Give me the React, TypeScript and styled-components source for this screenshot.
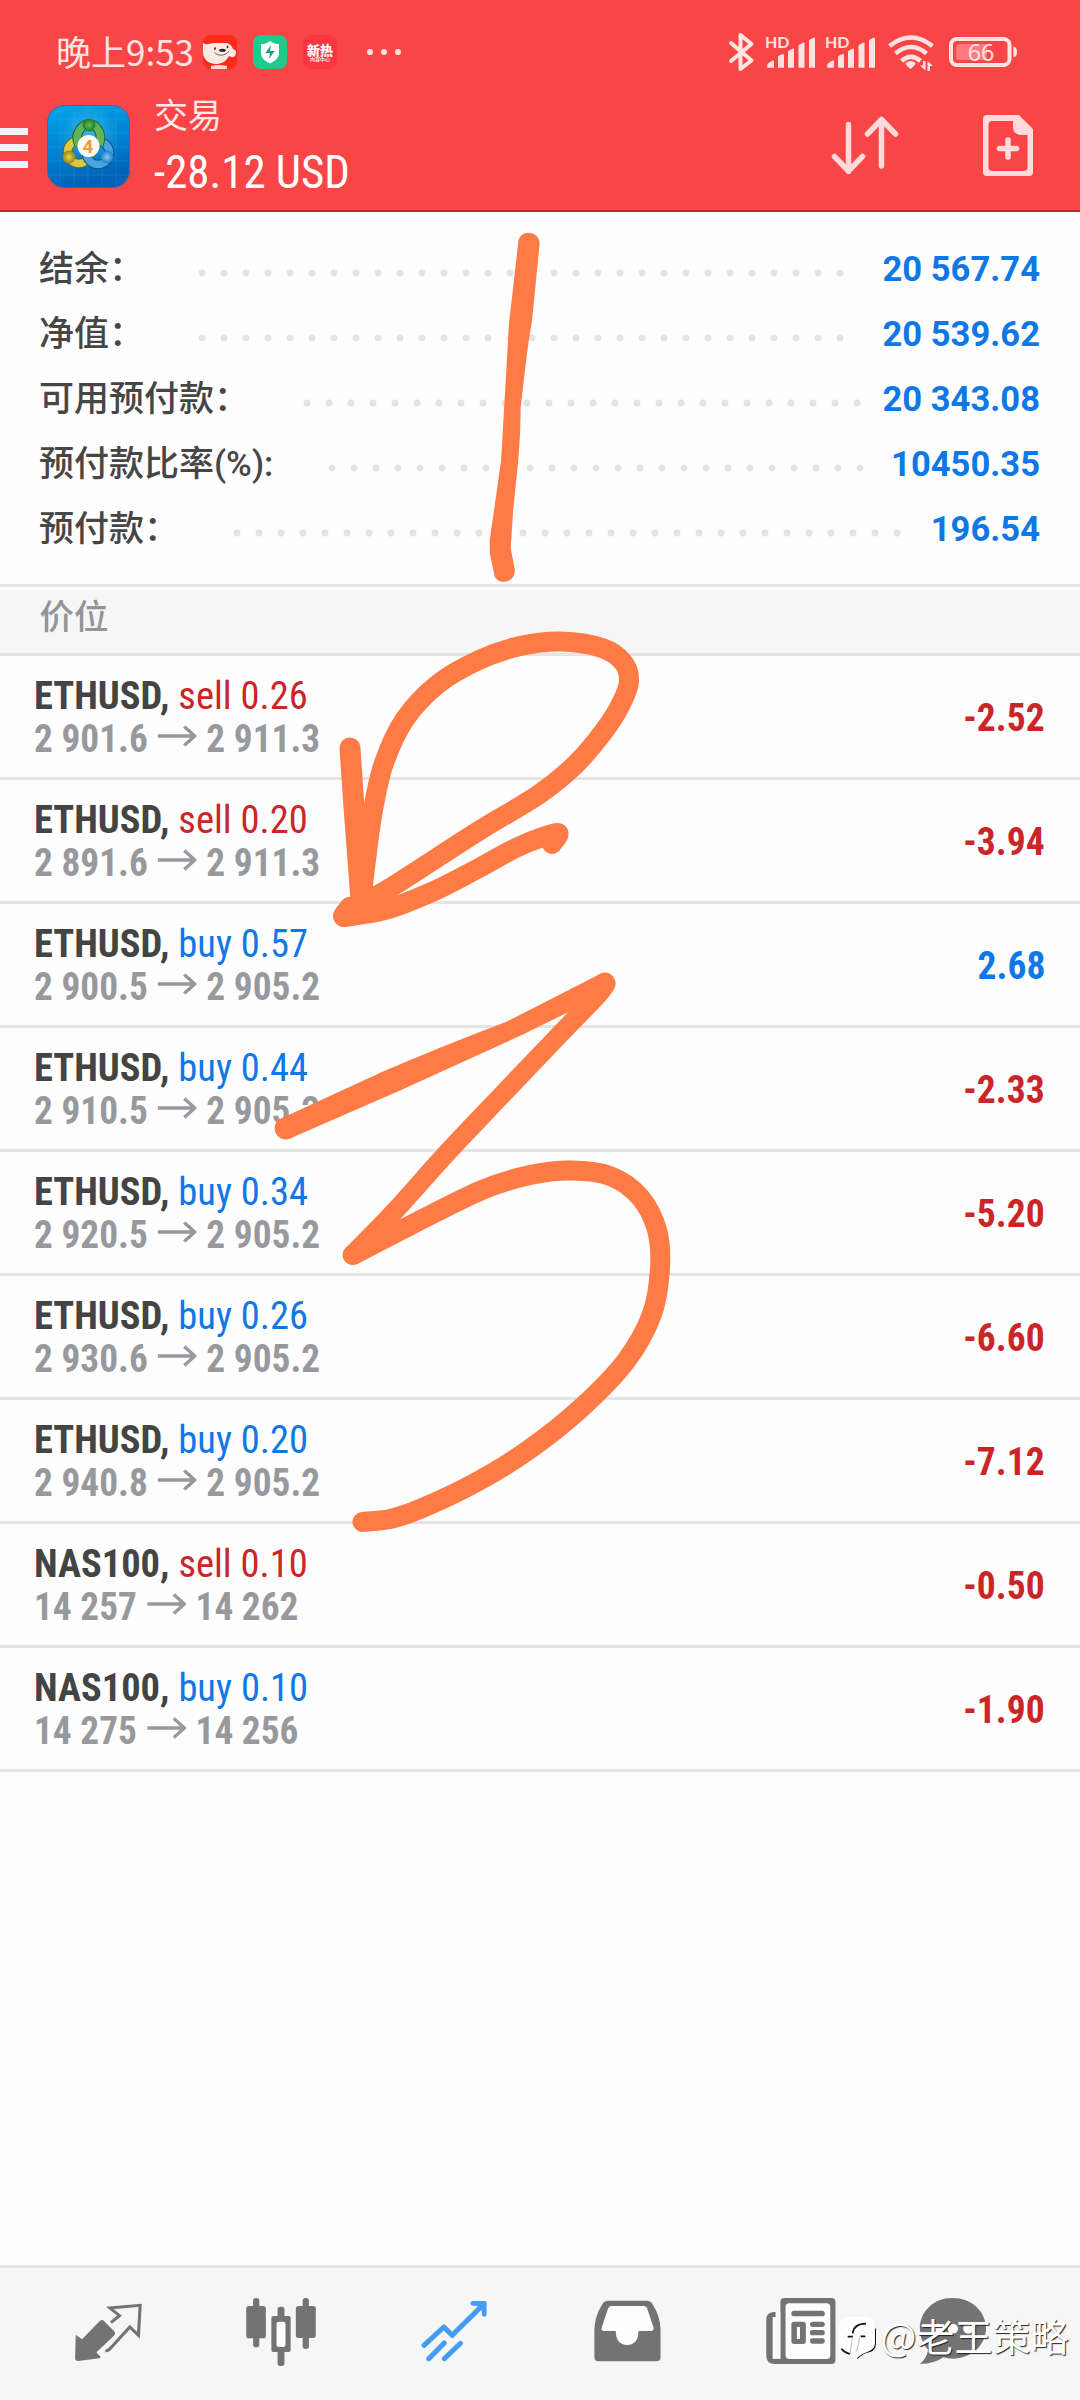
import React from 'react';
import styled, { createGlobalStyle } from 'styled-components';

const GlobalStyle = createGlobalStyle`
  html, body { margin: 0; padding: 0; background: #fefefe; }
  * { box-sizing: border-box; }
`;

const RED = '#fa4547';
const LOSS = '#cc2528';
const GAIN = '#0f78e6';
const NAV = '#737373';
const INK = '#ff7b45';
const CONDENSED = '"Roboto Condensed", Roboto, sans-serif';

const Screen = styled.div`
  position: relative;
  display: flex;
  flex-direction: column;
  width: 1080px;
  height: 2400px;
  overflow: hidden;
  background: #fefefe;
  font-family: Roboto, "Noto Sans CJK SC", sans-serif;
  white-space: nowrap;
`;

const Header = styled.header`
  display: flex;
  flex-direction: column;
  height: 212px;
  background: ${RED};
  border-bottom: 2px solid #c8282d;
`;

const StatusBar = styled.div`
  display: flex;
  align-items: center;
  height: 104px;
  padding: 0 60px 0 56px;
`;

const Clock = styled.div`
  width: 147px;
  padding-bottom: 2px;
  font: 400 35px/48px "Noto Sans CJK SC", sans-serif;
  color: #ffe3e3;
`;

const StatusApps = styled.div`
  display: flex;
  align-items: center;
  gap: 16px;
`;

const MiniApp = styled.div<{ $bg: string }>`
  display: flex;
  flex-direction: column;
  align-items: center;
  justify-content: center;
  width: 34px;
  height: 34px;
  border-radius: 8px;
  overflow: hidden;
  background: ${(p) => p.$bg};
  color: #fff;
`;

const MiniTitle = styled.span`
  font: 900 13px/13px "Noto Sans CJK SC", sans-serif;
`;

const MiniSub = styled.span`
  height: 6px;
  font: 500 5px/6px "Noto Sans CJK SC", sans-serif;
`;

const More = styled.div`
  display: flex;
  gap: 8px;
  margin-left: 30px;
`;

const MoreDot = styled.i`
  width: 6px;
  height: 6px;
  border-radius: 50%;
  background: #ffe3e3;
`;

const StatusIcons = styled.svg`
  margin-left: auto;
`;

const TitleBar = styled.div`
  display: flex;
  flex: 1;
  align-items: flex-start;
`;

const MenuButton = styled.div`
  display: flex;
  flex-direction: column;
  gap: 9.5px;
  width: 47px;
  padding-top: 23.5px;
`;

const MenuLine = styled.i`
  width: 27.5px;
  height: 7px;
  background: #f2f3fb;
`;

const AppLogo = styled.svg`
  flex: none;
  margin-top: 0.5px;
`;

const Heading = styled.div`
  display: flex;
  flex-direction: column;
  width: 660px;
  margin-left: 24px;
  color: #fff;
`;

const ScreenName = styled.span`
  height: 36px;
  margin-top: -8px;
  font: 400 34px/36px "Noto Sans CJK SC", sans-serif;
  color: #ffeaea;
`;

const Total = styled.span`
  margin-top: 12px;
  font-family: ${CONDENSED};
  font-size: 46.5px;
  line-height: 56px;
  transform: scaleX(0.965);
  transform-origin: left;
`;

const HeaderActions = styled.svg`
  flex: none;
  margin-top: 8px;
  margin-left: 11px;
`;

const Summary = styled.section`
  display: flex;
  flex-direction: column;
  height: 375px;
  padding: 23px 40px 0 39px;
  border-bottom: 3px solid #e4e4e4;
`;

const SummaryRow = styled.div`
  display: flex;
  align-items: center;
  height: 65px;
`;

const SummaryLabel = styled.div<{ $w: number }>`
  flex: none;
  width: ${(p) => p.$w}px;
  padding-top: 4px;
  font-size: 35px;
  font-weight: 500;
  line-height: 50px;
  color: #464646;
`;

const Leader = styled.div<{ $dots: number }>`
  flex: none;
  width: ${(p) => p.$dots * 22}px;
  height: 8px;
  margin-top: 11px;
  background: radial-gradient(circle at 11px 4px, #e3e3e3 3px, transparent 4px) 0 0 / 22px 8px repeat-x;
`;

const SummaryValue = styled.div`
  margin-left: auto;
  padding-top: 2px;
  font-size: 34.6px;
  font-weight: 700;
  color: ${GAIN};
`;

const SectionTitle = styled.div`
  height: 66px;
  margin-top: 3px;
  padding-left: 39.5px;
  background: #f6f6f6;
  border-bottom: 3px solid #e4e4e4;
  font: 500 34.5px/49px "Noto Sans CJK SC", sans-serif;
  color: #939497;
`;

const Position = styled.div`
  display: flex;
  align-items: center;
  justify-content: space-between;
  height: 124px;
  padding: 1px 35px 0 34px;
  border-bottom: 3px solid #e4e4e4;
  font-family: ${CONDENSED};
`;

const Details = styled.div`
  display: flex;
  flex-direction: column;
  margin-top: -1px;
`;

const DealLine = styled.div`
  font-size: 39.5px;
  line-height: 43px;
  transform: scaleX(0.975);
  transform-origin: left;
`;

const Symbol = styled.b`
  font-weight: 700;
  color: #444;
`;

const Side = styled.span<{ $buy: boolean }>`
  color: ${(p) => (p.$buy ? GAIN : LOSS)};
`;

const PriceLine = styled.div`
  display: flex;
  align-items: center;
  gap: 10px;
  height: 43px;
  font-size: 39.5px;
  font-weight: 700;
  line-height: 43px;
  color: #98999d;
  transform: scaleX(0.945);
  transform-origin: left;
`;

const Profit = styled.div<{ $gain: boolean }>`
  font-size: 39.5px;
  font-weight: 700;
  color: ${(p) => (p.$gain ? GAIN : LOSS)};
  transform: scaleX(0.95);
  transform-origin: right;
`;

const NavBar = styled.nav`
  display: flex;
  height: 135px;
  margin-top: auto;
  background: #f6f6f6;
  border-top: 3px solid #e4e4e4;
`;

const NavIcon = styled.svg`
  flex: none;
`;

const Ink = styled.svg`
  position: absolute;
  left: 0;
  top: 0;
  pointer-events: none;
`;

const Watermark = styled.div`
  position: absolute;
  left: 838.5px;
  top: 2308px;
  display: flex;
  align-items: center;
  gap: 4px;
  font: 400 38px/54px "Noto Sans CJK SC", sans-serif;
  color: #fff;
  text-shadow: 1px 1px 1px #222;
`;

const WatermarkLogo = styled.svg`
  margin-top: 6px;
`;

const balances = [
  { label: '结余：', width: 151.5, dots: 30, value: '20 567.74' },
  { label: '净值：', width: 151.5, dots: 30, value: '20 539.62' },
  { label: '可用预付款：', width: 256.5, dots: 26, value: '20 343.08' },
  { label: '预付款比率(%):', width: 281.5, dots: 25, value: '10450.35' },
  { label: '预付款：', width: 186.5, dots: 31, value: '196.54' },
];

const positions = [
  ['ETHUSD', 'sell', '0.26', '2 901.6', '2 911.3', '-2.52'],
  ['ETHUSD', 'sell', '0.20', '2 891.6', '2 911.3', '-3.94'],
  ['ETHUSD', 'buy', '0.57', '2 900.5', '2 905.2', '2.68'],
  ['ETHUSD', 'buy', '0.44', '2 910.5', '2 905.2', '-2.33'],
  ['ETHUSD', 'buy', '0.34', '2 920.5', '2 905.2', '-5.20'],
  ['ETHUSD', 'buy', '0.26', '2 930.6', '2 905.2', '-6.60'],
  ['ETHUSD', 'buy', '0.20', '2 940.8', '2 905.2', '-7.12'],
  ['NAS100', 'sell', '0.10', '14 257', '14 262', '-0.50'],
  ['NAS100', 'buy', '0.10', '14 275', '14 256', '-1.90'],
];

type Pt = [number, number];

/* Smooth curve through the points (Catmull-Rom converted to cubic Béziers). */
function curve(pts: Pt[]): string {
  let d = `M${pts[0][0]} ${pts[0][1]}`;
  for (let i = 0; i < pts.length - 1; i++) {
    const a = pts[i - 1] || pts[i];
    const b = pts[i];
    const c = pts[i + 1];
    const e = pts[i + 2] || c;
    d += `C${b[0] + (c[0] - a[0]) / 6} ${b[1] + (c[1] - a[1]) / 6} ${c[0] - (e[0] - b[0]) / 6} ${c[1] - (e[1] - b[1]) / 6} ${c[0]} ${c[1]}`;
  }
  return d;
}

const strokes: { w: number; pts: Pt[] }[] = [
  { w: 21, pts: [[350, 748], [353.5, 800], [361, 900]] },
  {
    w: 20,
    pts: [[361, 902], [366, 860], [373, 810], [384, 763], [405, 719], [438, 684], [479, 660], [520, 646], [561, 641.5], [602, 648], [623, 662], [629, 681], [621, 704], [604, 731], [575, 765], [538, 795], [477, 832], [390, 888], [345, 913]],
  },
  { w: 22, pts: [[344, 916], [350, 908]] },
  { w: 20, pts: [[344, 917], [385, 910], [434, 891], [477, 869], [520, 846], [557, 833], [552, 844]] },
  { w: 22, pts: [[285.5, 1128.5], [288, 1127.500]] },
  { w: 21, pts: [[605, 983], [600, 987]] },
  { w: 19, pts: [[606, 984], [596, 997], [553.5, 1041], [500, 1097], [446, 1154], [393, 1213], [352, 1255]] },
  {
    w: 20,
    pts: [[353, 1255], [411, 1225], [482, 1190], [530, 1175], [571, 1170.5], [610, 1176], [640, 1197], [657, 1230], [660, 1268], [652, 1314], [626, 1361], [580, 1409], [527, 1451], [473, 1484], [420, 1509], [390, 1519], [362.5, 1522]],
  },
];

const Signal = ({ x }: { x: number }) => (
  <g transform={`translate(${x} 0)`}>
    <text x="0" y="17" fontSize="16" fontWeight="700" fontFamily="Lato, sans-serif">HD</text>
    <path d="M2.300 36.700v-3q0-1 1-1.500l4-2.700q1.700-.500 1.700 1v6.200zM13 36.700V26q0-1 1-1.500l4-1.500q1 0 1 1v12.700zM23 36.700V21q0-1 1-1.500l4-2q1 0 1 1v18.200zM33.500 36.700V15q0-1 1-1.500l4-2q1 0 1 1v24.200zM44 36.700V10q0-1 1-1.500l4-2q1 0 1 1v29.200z" />
  </g>
);

export default function App() {
  return (
    <Screen>
      <GlobalStyle />
      <Header>
        <StatusBar>
          <Clock>晚上9:53</Clock>
          <StatusApps>
            <MiniApp $bg="#fd2a18">
              <svg width="34" height="34" viewBox="0 0 34 34">
                <path d="M0 8c3 2 6 1 10 0h14c3 1 5 3 6 6 3 1 4 3 2 7-2 2-4 1-6 0-3 6-8 8-13 8C5 29 0 24 0 17z" fill="#fbe9e4" />
                <path d="M8 34v-3c5-1.500 11-1.500 16 0v3z" fill="#f8dcd6" />
                <ellipse cx="19.500" cy="15.300" rx="3.300" ry="1.500" fill="#222" />
                <ellipse cx="12" cy="13.500" rx="0.800" ry="1.600" fill="#222" />
                <ellipse cx="24.500" cy="12" rx="0.800" ry="1.400" fill="#222" />
                <path d="M11.500 17.500c3 3.500 11 4 14.500-1.500" fill="none" stroke="#444" strokeWidth="0.800" />
              </svg>
            </MiniApp>
            <MiniApp $bg="#1dcb8c">
              <svg width="34" height="34" viewBox="0 0 34 34">
                <path d="M17 6c3 2.500 6 3 9 3v9c0 5-4 8-9 10.500C12 26 8 23 8 18V9c3 0 6-.5 9-3z" fill="#fff" />
                <path d="M18 10l-5.500 8H17l-1 6 5.500-8H17z" fill="#159f6d" />
              </svg>
            </MiniApp>
            <MiniApp $bg="#fb3640">
              <MiniTitle>新热</MiniTitle>
              <MiniSub>内容中心</MiniSub>
            </MiniApp>
          </StatusApps>
          <More>
            <MoreDot />
            <MoreDot />
            <MoreDot />
          </More>
          <StatusIcons width="292" height="42" viewBox="0 0 292 42" fill="#ffe3e3">
            <path d="M3 12l20.500 17.500-11 8.500V4l11 9L3 30" fill="none" stroke="#ffe3e3" strokeWidth="4" strokeLinejoin="round" strokeLinecap="round" />
            <Signal x={37} />
            <Signal x={97} />
            <g fill="none" stroke="#ffe3e3" strokeWidth="4.500">
              <path d="M161.500 15q21.500-17 43 0" />
              <path d="M167.500 22.500q15.500-13 31 0" />
              <path d="M173.500 30q9.500-8.500 19 0" />
            </g>
            <path d="M177.500 32q5.500-4 10 0 0 2-5 6-5-4-5-6z" />
            <path d="M197.500 30v9.500l-5.500-5h3V30zM199.500 40v-10l5.500 5h-3v5z" />
            <rect x="223" y="8" width="58.500" height="26" rx="6" fill="none" stroke="#ffe3e3" strokeWidth="4" />
            <rect x="228" y="13" width="31" height="16" rx="3" fill="#ff7b7d" />
            <path d="M285.300 15.700q3.700 0 3.700 5.200t-3.700 5.200z" />
            <text x="253" y="30" fontSize="23.300" textAnchor="middle" fontFamily="Noto Sans, sans-serif">66</text>
          </StatusIcons>
        </StatusBar>
        <TitleBar>
          <MenuButton>
            <MenuLine />
            <MenuLine />
            <MenuLine />
          </MenuButton>
          <AppLogo width="83" height="83" viewBox="0 0 83 83">
            <defs>
              <linearGradient id="tile" x1="0" y1="0" x2="0.250" y2="1">
                <stop offset="0" stopColor="#00a6e8" />
                <stop offset="0.550" stopColor="#0083d4" />
                <stop offset="1" stopColor="#0061b6" />
              </linearGradient>
              <radialGradient id="glow">
                <stop offset="0" stopColor="#8fe4ff" stopOpacity="0.400" />
                <stop offset="1" stopColor="#8fe4ff" stopOpacity="0" />
              </radialGradient>
              <radialGradient id="green"><stop offset="0" stopColor="#5fbf50" /><stop offset="1" stopColor="#1f7a28" /></radialGradient>
              <radialGradient id="gold"><stop offset="0" stopColor="#e8d850" /><stop offset="1" stopColor="#8f8418" /></radialGradient>
              <radialGradient id="sky"><stop offset="0" stopColor="#7fd0fa" /><stop offset="1" stopColor="#1b7dc6" /></radialGradient>
            </defs>
            <rect x="0.500" y="0.500" width="82" height="82" rx="17" fill="url(#tile)" stroke="#2a6fa9" strokeWidth="1" />
            <path d="M13 2v79M27 2v79M41 2v79M55 2v79M69 2v79M2 14h79M2 28h79M2 42h79M2 56h79M2 70h79" stroke="#4fc0f0" strokeOpacity="0.180" />
            <circle cx="42" cy="30" r="30" fill="url(#glow)" />
            <g fill="none">
              <circle cx="32" cy="47" r="11.500" stroke="#6d6510" strokeWidth="9.500" />
              <circle cx="32" cy="47" r="11.500" stroke="#d8ca48" strokeWidth="7.500" />
              <circle cx="51" cy="48" r="11.500" stroke="#0a4f8c" strokeWidth="9.500" />
              <circle cx="51" cy="48" r="11.500" stroke="#4aa4e0" strokeWidth="7.500" />
              <path d="M32 40q-4-8 0-14 4-7 10-7t10 7q3 6 0 14" stroke="#1b6b2c" strokeWidth="9.500" />
              <path d="M32 40q-4-8 0-14 4-7 10-7t10 7q3 6 0 14" stroke="#63b35c" strokeWidth="7.500" />
            </g>
            <circle cx="42" cy="20" r="6.500" fill="url(#green)" />
            <circle cx="22" cy="52" r="6.500" fill="url(#gold)" />
            <circle cx="60" cy="52" r="6.500" fill="url(#sky)" />
            <circle cx="41.500" cy="41" r="11" fill="#fbfaf6" />
            <text x="41" y="47.500" fontSize="19" fontWeight="700" textAnchor="middle" fill="#f09a3c" fontFamily="Roboto, sans-serif">4</text>
          </AppLogo>
          <Heading>
            <ScreenName>交易</ScreenName>
            <Total>-28.12 USD</Total>
          </Heading>
          <HeaderActions width="240" height="70" viewBox="825 112 240 70" fill="none" stroke="#ffdada" strokeWidth="5.500" strokeLinecap="round" strokeLinejoin="round">
            <path d="M848.500 124.500v47M834.500 156.500l14 14.500 14-14.500M881.500 166v-46M867.500 134l14-14.500 14 14.500" />
            <path d="M1019 115l14 14v43q0 4-4 4h-42q-4 0-4-4v-53q0-4 4-4zM1013 121h-21q-3.500 0-3.500 4v42q0 4 4 4h31q4 0 4-4v-32h-5q-9.500 0-9.500-8z" fill="#ffdada" fillRule="evenodd" stroke="none" />
            <path d="M1008 140v17M999.500 148.500h17" />
          </HeaderActions>
        </TitleBar>
      </Header>

      <Summary>
        {balances.map((b) => (
          <SummaryRow key={b.label}>
            <SummaryLabel $w={b.width}>{b.label}</SummaryLabel>
            <Leader $dots={b.dots} />
            <SummaryValue>{b.value}</SummaryValue>
          </SummaryRow>
        ))}
      </Summary>

      <SectionTitle>价位</SectionTitle>
      {positions.map(([symbol, side, lots, open, now, profit]) => (
        <Position key={symbol + side + lots}>
          <Details>
            <DealLine>
              <Symbol>{symbol},</Symbol> <Side $buy={side === 'buy'}>{side} {lots}</Side>
            </DealLine>
            <PriceLine>
              <span>{open}</span>
              <svg width="42" height="30" viewBox="0 0 42 30" fill="none" stroke="#98999d" strokeWidth="3.600">
                <path d="M1 13h39M29 3.500l11 9.500-11 9.500" />
              </svg>
              <span>{now}</span>
            </PriceLine>
          </Details>
          <Profit $gain={!profit.startsWith('-')}>{profit}</Profit>
        </Position>
      ))}

      <NavBar>
        <NavIcon width="180" height="132" viewBox="0 54 522.700 396" preserveAspectRatio="none" fill={NAV}>
          <path d="M220 254l18 14 52-55q7-6 12 0l29 30q7 7 0 14l-51 50 12 14q2 3-3 4l-62 8q-9 0-9-9z" />
          <path d="M322 218l25-21-28-23 88-8-5 90-25-25-60 68q-5 4-11 3" fill="none" stroke={NAV} strokeWidth="9" />
        </NavIcon>
        <NavIcon width="180" height="132" viewBox="522.700 54 522.700 396" preserveAspectRatio="none" fill={NAV}>
          <rect x="735" y="144" width="18" height="148" rx="8" />
          <rect x="715" y="168" width="57" height="97" rx="8" />
          <rect x="879" y="144" width="18" height="153" rx="8" />
          <rect x="859" y="168" width="58" height="96" rx="8" />
          <rect x="806" y="170" width="20" height="178" rx="8" />
          <rect x="788" y="198" width="56" height="108" rx="6" />
          <rect x="803" y="215" width="26" height="76" rx="7" fill="#fdfdfd" />
        </NavIcon>
        <NavIcon width="180" height="132" viewBox="1045.300 54 522.700 396" preserveAspectRatio="none" fill="none" stroke="#459df3" strokeWidth="15" strokeLinecap="round" strokeLinejoin="round">
          <path d="M1231 286l58-55 24 25 92-94M1245 326l45-47M1290 326l47-46" />
          <path d="M1373 160h33v33" strokeWidth="14" />
          <path d="M1380 160h25v25z" fill="#459df3" strokeWidth="4" />
        </NavIcon>
        <NavIcon width="180" height="132" viewBox="0 54 522.700 396" preserveAspectRatio="none" fill={NAV}>
          <path d="M197 152H310q12 0 17 11 23 38 23 77v82q0 12-12 12H170q-12 0-12-12v-82q0-39 22-76 6-12 17-12z" />
          <path d="M208 168h93q7 0 10 7l19 58q1 9-8 10h-36q0 41-33 42-33-1-33-42h-34q-9-1-7-10l19-58q3-7 10-7z" fill="#fdfdfd" />
        </NavIcon>
        <NavIcon width="180" height="132" viewBox="522.700 54 522.700 396" preserveAspectRatio="none" fill={NAV}>
          <path d="M684 200v-14h-6q-21 2-21 23v108q0 25 25 25h164q12 0 12-12V156q0-12-12-12H710q-12 0-12 12v170h-22V212q0-10 8-12z" />
          <rect x="676" y="201" width="10" height="125" fill="#fdfdfd" />
          <rect x="686" y="186" width="12" height="140" fill="#f8f8f8" />
          <rect x="713" y="160" width="130" height="167" rx="11" fill="#fdfdfd" />
          <rect x="730" y="182" width="97" height="17" rx="8" />
          <path fillRule="evenodd" d="M738 215h26q8 0 8 8v51q0 8-8 8h-26q-8 0-8-8v-51q0-8 8-8zM746 231v36h9v-36z" />
          <rect x="784" y="215" width="43" height="16" rx="8" />
          <rect x="784" y="240" width="43" height="16" rx="8" />
          <rect x="784" y="265" width="43" height="16" rx="8" />
        </NavIcon>
        <NavIcon width="180" height="132" viewBox="1045.300 54 522.700 396" preserveAspectRatio="none" fill={NAV}>
          <g transform="translate(522.700 0)">
            <path d="M675.300 144c54 0 97 40 97 91s-43 91-97 91q-14 0-27-4-24 19-68 20 20-17 24-42-24-26-24-65c0-51 41-91 95-91z" />
            <circle cx="632" cy="236" r="15" fill="#fdfdfd" />
            <circle cx="676" cy="236" r="15" fill="#fdfdfd" />
            <circle cx="721" cy="236" r="15" fill="#fdfdfd" />
          </g>
        </NavIcon>
      </NavBar>

      <Ink width="1080" height="1600" viewBox="0 0 1080 1600" fill="none" stroke={INK} strokeLinecap="round" strokeLinejoin="round">
        <g transform="translate(0 220) scale(0.344400 0.333333)">
          <path
            d="M1505 66C1507 28 1565 28 1567 70L1545 300Q1532 380 1528 420L1512 560Q1512 640 1505 720L1490 870 1483 985 1495 1050C1496 1094 1438 1096 1435 1062L1422 1000V960L1436 860 1455 720 1464 560 1478 310z"
            fill={INK}
            stroke="none"
          />
        </g>
        <path d="M281 1118.500L383 1071.500Q440 1047 507 1021.500L600 974 611 992Q570 1011 524 1034L400 1090.500 290 1138.500z" fill={INK} stroke="none" />
        {strokes.map((s, i) => (
          <path key={i} d={curve(s.pts)} strokeWidth={s.w} />
        ))}
      </Ink>

      <Watermark>
        <WatermarkLogo width="38" height="44" viewBox="27 60 114 132">
          <path d="M138 95v48q-1 20-20 26-18 3-36 21 0-12 6-18" fill="#111" />
          <path d="M55 62H110Q135 64 135 92V141Q135 161 113 167 95 173 81 185 84 174 76 166L66 172Q30 168 27 130V92Q28 64 55 62z" fill="#fff" />
          <path d="M68 112q4-29 40-29M53 122h16M92 121h14M34 158q10 12 26 16" fill="none" stroke="#111" strokeWidth="5" />
          <path d="M60 172l8-50M79 166q8-20 10-45" fill="none" stroke="#bbb" strokeWidth="3" />
        </WatermarkLogo>
        <span>@老王策略</span>
      </Watermark>
    </Screen>
  );
}
